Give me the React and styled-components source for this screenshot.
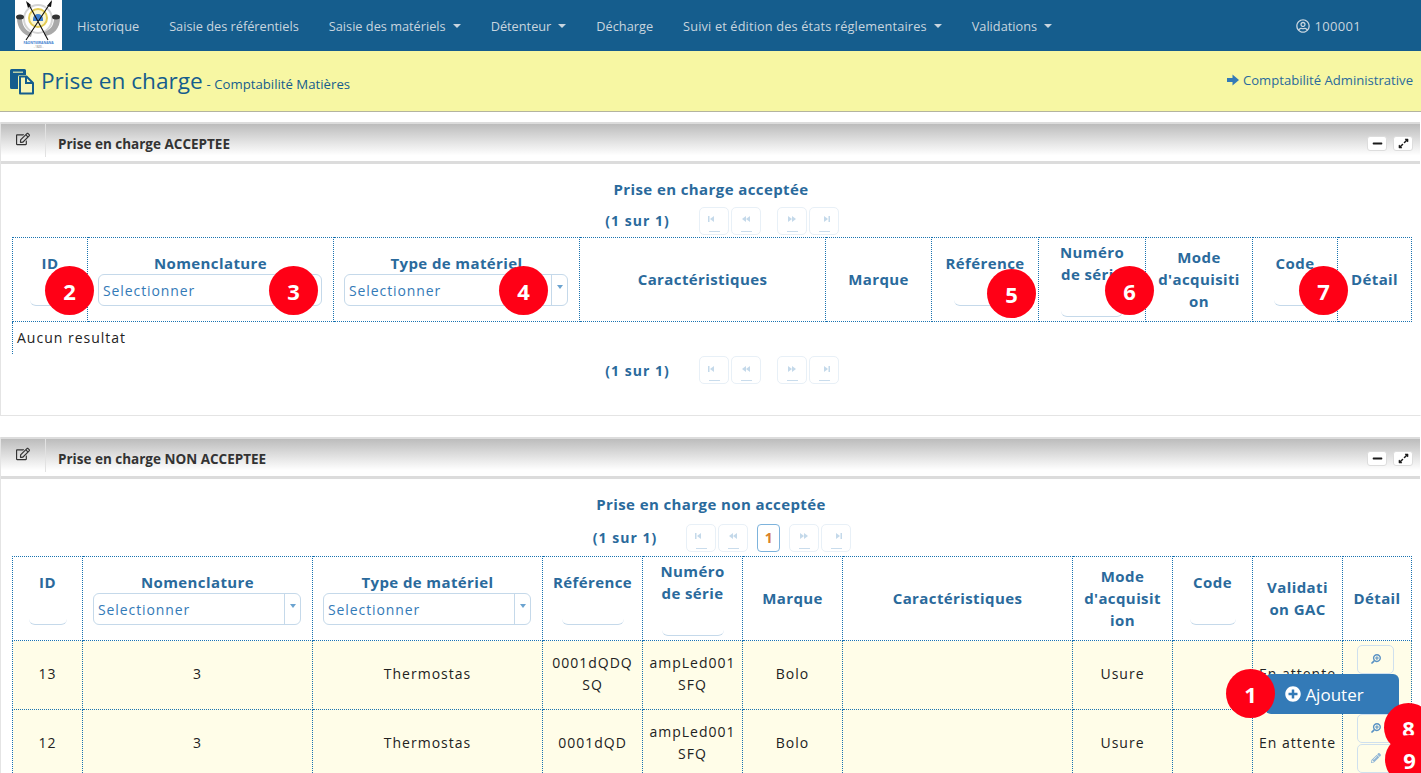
import React from "react";
import styled, { createGlobalStyle } from "styled-components";
import { FaRegEdit, FaMinus, FaExpandAlt, FaPlusCircle, FaSearchPlus, FaPencilAlt, FaRegUserCircle } from "react-icons/fa";

const GlobalStyle = createGlobalStyle`
  html, body { margin: 0; padding: 0; height: 773px; overflow: hidden; background: #fff; }
  body { font-family: "Open Sans", "Noto Sans", sans-serif; }
  * { box-sizing: border-box; }
`;

const BLUE = "#155d8d";
const LINK = "#2a6a9c";
const DOTS = "1px dotted #1a73b0";

const Page = styled.div`
  position: relative;
  width: 1421px;
  height: 773px;
  overflow: hidden;
`;

const Navbar = styled.nav`
  height: 51px;
  background: ${BLUE};
  display: flex;
  align-items: flex-start;
  padding-left: 15px;
`;

const LogoBox = styled.div`
  width: 47px;
  height: 50px;
  background: #fff;
`;

const NavItem = styled.a`
  height: 51px;
  padding: 0 15px;
  display: flex;
  align-items: center;
  gap: 6px;
  font-size: 12.75px;
  letter-spacing: ${(p) => p.$spacing || 0}px;
  color: #c8d5df;
  white-space: nowrap;
`;

const Caret = styled.span`
  width: 0;
  height: 0;
  margin-left: 1px;
  border-left: 4px solid transparent;
  border-right: 4px solid transparent;
  border-top: 4px solid #c8d5df;
`;

const UserItem = styled(NavItem)`
  margin-left: auto;
  padding-right: 60px;
  gap: 5px;
  font-size: 13px;
  letter-spacing: 0.3px;
  svg { font-size: 14px; }
`;

const SubHeader = styled.header`
  height: 61px;
  background: #f7f7a3;
  border-bottom: 1px solid #b3b3a0;
  display: flex;
  align-items: center;
  justify-content: space-between;
  padding: 0 8px 0 10px;
  color: ${BLUE};
`;

const TitleWrap = styled.div`
  display: flex;
  align-items: center;
  gap: 7px;
  margin-top: 2px;
`;

const PageTitle = styled.h1`
  margin: 0;
  font-size: 22.6px;
  font-weight: 400;
  line-height: 34px;
`;

const PageSub = styled.small`
  font-size: 13.2px;
  margin-left: -2px;
`;

const AdminLink = styled.a`
  display: flex;
  align-items: center;
  gap: 4px;
  font-size: 13.1px;
  margin-bottom: 2px;
  color: ${LINK};
`;

const Panel = styled.section`
  margin-top: ${(p) => p.$top}px;
  height: ${(p) => p.$height}px;
  border-left: 1px solid #e4e4e4;
  border-right: 1px solid transparent;
  border-bottom: 1px solid #e4e4e4;
`;

const PanelHead = styled.div`
  height: 42px;
  border-top: 2px solid #dcdcdc;
  border-bottom: 3px solid #dcdcdc;
  background: linear-gradient(to bottom, #bcbcbc 0%, #e8e8e8 55%, #fff 85%);
  display: flex;
  align-items: stretch;
`;

const PanelIcon = styled.div`
  width: 45px;
  border-right: 1px solid #e2e2e2;
  margin-bottom: 4px;
  padding: 7px 0 0 15px;
  color: #333;
  font-size: 14px;
`;

const PanelTitle = styled.h2`
  margin: 0;
  padding: 11px 0 0 12px;
  font-size: 13.5px;
  font-weight: 700;
  color: #333;
`;

const PanelTools = styled.div`
  margin-left: auto;
  display: flex;
  gap: 6px;
  padding: 12px 7px 0 0;
`;

const ToolButton = styled.button`
  width: 20px;
  height: 15px;
  padding: 0;
  border: 1px solid #ddd;
  border-radius: 3px;
  background: #fff;
  color: #1b1b1b;
  display: flex;
  align-items: center;
  justify-content: center;
  font-size: 11px;
`;

const PanelBody = styled.div`
  padding: ${(p) => p.$top}px 10px 0 11px;
`;

const TableTitle = styled.div`
  text-align: center;
  font-size: 15px;
  line-height: 22px;
  font-weight: 700;
  letter-spacing: 0.4px;
  color: ${LINK};
`;

const Pager = styled.div`
  height: 29px;
  margin: ${(p) => p.$margin};
  padding-left: 22px;
  display: flex;
  justify-content: center;
  align-items: center;
  gap: 2px;
`;

const PagerText = styled.span`
  font-size: 14px;
  font-weight: 700;
  letter-spacing: 1px;
  color: ${LINK};
  margin-right: 27px;
`;

const PagerBtn = styled.span`
  position: relative;
  width: 30px;
  height: 28px;
  border: 1px solid #e8f0f7;
  border-radius: 5px;
  display: flex;
  align-items: center;
  justify-content: center;
  margin-right: ${(p) => (p.$gap ? "14px" : "0")};
  padding-bottom: 3px;
  background: #fff;
  &::after {
    content: "";
    position: absolute;
    left: 9px;
    bottom: 2px;
    width: 11px;
    height: 1px;
    background: #c9dcec;
  }
`;

const PageNum = styled.span`
  width: 23px;
  height: 28px;
  margin: 0 7px;
  border: 1px solid #7db3dc;
  border-radius: 4px;
  font-size: 14px;
  font-weight: 700;
  color: #d9822b;
  display: flex;
  align-items: center;
  justify-content: center;
`;

const Table = styled.table`
  width: 1399px;
  table-layout: fixed;
  border-collapse: collapse;
`;

const Th = styled.th`
  height: 84px;
  padding: 0 0 2px;
  border: ${DOTS};
  vertical-align: middle;
  text-align: center;
  font-size: 15px;
  line-height: 22px;
  font-weight: 700;
  letter-spacing: 0.4px;
  color: ${LINK};
`;

const Td = styled.td`
  height: 69px;
  padding: 0 4px 2px;
  border: ${DOTS};
  text-align: center;
  vertical-align: middle;
  background: #fffde8;
  font-size: 14px;
  line-height: 22px;
  letter-spacing: 1px;
  color: #222;
`;

const EmptyCell = styled.td`
  height: 32px;
  padding: 0 4px;
  border-left: ${DOTS};
  font-size: 14px;
  letter-spacing: 1px;
  color: #222;
`;

const FilterInput = styled.div`
  height: 32px;
  width: ${(p) => p.$width}px;
  margin: 0 auto;
  border-bottom: 1px solid #c5d9ea;
  border-radius: 6px;
`;

const SelectBox = styled.div`
  height: 32px;
  margin: 0 11px 0 10px;
  display: flex;
  border: 1px solid #c5d9ea;
  border-radius: 6px;
  font-size: 14px;
  font-weight: 400;
  letter-spacing: 0.9px;
  color: #337ab7;
  text-align: left;
`;

const SelectText = styled.span`
  flex: 1;
  padding-left: 4px;
  line-height: 31px;
  border-right: 1px solid #c5d9ea;
`;

const SelectArrow = styled.span`
  width: 15px;
  display: flex;
  justify-content: center;
  padding-top: 10px;
  &::after {
    content: "";
    width: 0;
    height: 0;
    border-left: 3px solid transparent;
    border-right: 3px solid transparent;
    border-top: 4px solid #6ba3d0;
  }
`;

const DetailStack = styled.div`
  display: flex;
  flex-direction: column;
  align-items: center;
  gap: 1px;
  padding-right: 3px;
`;

const DetailBtn = styled.span`
  width: 37px;
  height: 29px;
  border: 1px solid #cfe0ee;
  border-radius: 5px;
  background: #fffde8;
  display: flex;
  align-items: center;
  justify-content: center;
  color: ${(p) => (p.$flip ? "#5b93c4" : "#8fb5d6")};
  font-size: 10px;
  svg { transform: ${(p) => (p.$flip ? "scaleX(-1)" : "none")}; }
`;

const AddButton = styled.button`
  position: absolute;
  left: 1265px;
  top: 674px;
  width: 134px;
  height: 40px;
  padding: 0 15px 0 0;
  border: none;
  border-radius: 6px;
  background: #337ab7;
  color: #fff;
  font-family: inherit;
  font-size: 17px;
  display: flex;
  align-items: center;
  justify-content: center;
  gap: 4px;
  svg { font-size: 16px; }
`;

const Badge = styled.span`
  position: absolute;
  left: ${(p) => p.$x - 25}px;
  top: ${(p) => p.$y - 25}px;
  width: 49px;
  height: 49px;
  border-radius: 50%;
  background: #ff0016;
  color: #fff;
  font-size: 22px;
  font-weight: 700;
  display: flex;
  align-items: center;
  justify-content: center;
`;

function Logo() {
  return (
    <svg width="47" height="50" viewBox="0 0 47 50">
      <circle cx="23" cy="19" r="14" fill="none" stroke="#d4d4d4" strokeWidth="2" />
      <path d="M2 18 C2 28 8 35 16 37 L17 33 C11 31 7 26 7 18 Z" fill="#a9a9a9" />
      <path d="M45 18 C45 28 39 35 30 36 L29 32 C35 30 39 26 39 18 Z" fill="#a9a9a9" />
      <ellipse cx="5" cy="17" rx="4" ry="2.5" fill="#333" />
      <ellipse cx="41" cy="17" rx="4" ry="2.5" fill="#333" />
      <circle cx="23" cy="18" r="9" fill="#fbf6d0" stroke="#e3cc55" strokeWidth="2" />
      <path d="M18 19a5 5 0 0 1 10 0v2h-10z" fill="#3f7fd0" />
      <path d="M13 3 L33 40 M36 2 L11 40" stroke="#111" strokeWidth="1.1" />
      <path d="M37 0 L32 6 L36 7 Z M11 1 L13 8 L16 5 Z" fill="#111" />
      <text x="23.5" y="43.5" fontSize="3.4" fontWeight="700" fill="#3f7fd0" textAnchor="middle">FAONTSERANANA</text>
      <text x="23.5" y="48" fontSize="2.8" fill="#666" textAnchor="middle">- 1820 -</text>
    </svg>
  );
}

// back sheet is solid, front sheet is an outline with a folded corner
function DocsIcon() {
  return (
    <svg width="24" height="26" viewBox="0 0 24 26">
      <path d="M1.5 0h13A1.5 1.5 0 0 1 16 1.5V6h-6a2 2 0 0 0-2 2v12H1.5A1.5 1.5 0 0 1 0 18.5v-17A1.5 1.5 0 0 1 1.5 0z" fill="#155d8d" />
      <rect x="3" y="2.5" width="10" height="1.5" fill="#b9cfa8" />
      <path d="M10 7.5h6.5L23 14v10.5H10z" fill="#f9f6b4" stroke="#155d8d" strokeWidth="2" strokeLinejoin="round" />
      <path d="M16 8v6h6" fill="none" stroke="#155d8d" strokeWidth="2" />
    </svg>
  );
}

function ArrowIcon() {
  return (
    <svg width="12" height="12" viewBox="0 0 12 12" fill="#337ab7">
      <path d="M0 4h5.5V0.5L12 6l-6.5 5.5V8H0z" />
    </svg>
  );
}

function SeekIcon({ last, end }) {
  return (
    <svg width="12" height="8" viewBox="0 0 12 8" fill="#c4d9ea" transform={last ? "scale(-1 1)" : undefined}>
      {end && <rect x="0" y="1" width="1.5" height="6" />}
      <path d="M2 4l4-3v6z" />
      {!end && <path d="M6 4l4-3v6z" />}
    </svg>
  );
}

function PagerBar({ page, margin }) {
  return (
    <Pager $margin={margin}>
      <PagerText>(1 sur 1)</PagerText>
      <PagerBtn><SeekIcon end /></PagerBtn>
      <PagerBtn $gap={!page}><SeekIcon /></PagerBtn>
      {page && <PageNum>1</PageNum>}
      <PagerBtn><SeekIcon last /></PagerBtn>
      <PagerBtn><SeekIcon last end /></PagerBtn>
    </Pager>
  );
}

function PanelHeader({ title }) {
  return (
    <PanelHead>
      <PanelIcon><FaRegEdit /></PanelIcon>
      <PanelTitle>{title}</PanelTitle>
      <PanelTools>
        <ToolButton><FaMinus /></ToolButton>
        <ToolButton><FaExpandAlt /></ToolButton>
      </PanelTools>
    </PanelHead>
  );
}

function SelectFilter() {
  return (
    <SelectBox>
      <SelectText>Selectionner</SelectText>
      <SelectArrow />
    </SelectBox>
  );
}

const acceptedCols = [75, 246, 246, 246, 106, 107, 107, 107, 85, 74];
const pendingCols = [70, 230, 230, 100, 100, 100, 230, 100, 80, 90, 69];

const rows = [
  { id: 13, ref: "0001dQDQ SQ" },
  { id: 12, ref: "0001dQD" },
];

const badges = [
  { n: 2, x: 70, y: 291 },
  { n: 3, x: 294, y: 291 },
  { n: 4, x: 524, y: 291 },
  { n: 5, x: 1012, y: 294 },
  { n: 6, x: 1130, y: 291 },
  { n: 7, x: 1324, y: 291 },
  { n: 1, x: 1251, y: 694 },
  { n: 8, x: 1409, y: 728 },
  { n: 9, x: 1410, y: 760 },
];

export default function App() {
  return (
    <Page>
      <GlobalStyle />
      <Navbar>
        <LogoBox><Logo /></LogoBox>
        <NavItem>Historique</NavItem>
        <NavItem>Saisie des référentiels</NavItem>
        <NavItem>Saisie des matériels <Caret /></NavItem>
        <NavItem>Détenteur <Caret /></NavItem>
        <NavItem>Décharge</NavItem>
        <NavItem $spacing={0.15}>Suivi et édition des états réglementaires <Caret /></NavItem>
        <NavItem>Validations <Caret /></NavItem>
        <UserItem><FaRegUserCircle /> 100001</UserItem>
      </Navbar>

      <SubHeader>
        <TitleWrap>
          <DocsIcon />
          <PageTitle>Prise en charge <PageSub>- Comptabilité Matières</PageSub></PageTitle>
        </TitleWrap>
        <AdminLink><ArrowIcon /> Comptabilité Administrative</AdminLink>
      </SubHeader>

      <Panel $top={10} $height={294}>
        <PanelHeader title="Prise en charge ACCEPTEE" />
        <PanelBody $top={14}>
          <TableTitle>Prise en charge acceptée</TableTitle>
          <PagerBar margin="6px 0 2px" />
          <Table>
            <colgroup>{acceptedCols.map((w, i) => <col key={i} width={w} />)}</colgroup>
            <thead>
              <tr>
                <Th>ID<FilterInput $width={40} /></Th>
                <Th>Nomenclature<SelectFilter /></Th>
                <Th>Type de matériel<SelectFilter /></Th>
                <Th>Caractéristiques</Th>
                <Th>Marque</Th>
                <Th>Référence<FilterInput $width={62} /></Th>
                <Th>Numéro<br />de série<FilterInput $width={62} /></Th>
                <Th>Mode<br />d'acquisiti<br />on</Th>
                <Th>Code<FilterInput $width={42} /></Th>
                <Th>Détail</Th>
              </tr>
            </thead>
            <tbody>
              <tr><EmptyCell colSpan={10}>Aucun resultat</EmptyCell></tr>
            </tbody>
          </Table>
          <PagerBar margin="2px 0 0" />
        </PanelBody>
      </Panel>

      <Panel $top={21} $height={340}>
        <PanelHeader title="Prise en charge NON ACCEPTEE" />
        <PanelBody $top={14}>
          <TableTitle>Prise en charge non acceptée</TableTitle>
          <PagerBar page margin="8px 0 4px" />
          <Table>
            <colgroup>{pendingCols.map((w, i) => <col key={i} width={w} />)}</colgroup>
            <thead>
              <tr>
                <Th>ID<FilterInput $width={38} /></Th>
                <Th>Nomenclature<SelectFilter /></Th>
                <Th>Type de matériel<SelectFilter /></Th>
                <Th>Référence<FilterInput $width={62} /></Th>
                <Th>Numéro<br />de série<FilterInput $width={62} /></Th>
                <Th>Marque</Th>
                <Th>Caractéristiques</Th>
                <Th>Mode<br />d'acquisit<br />ion</Th>
                <Th>Code<FilterInput $width={46} /></Th>
                <Th>Validati<br />on GAC</Th>
                <Th>Détail</Th>
              </tr>
            </thead>
            <tbody>
              {rows.map((r) => (
                <tr key={r.id}>
                  <Td>{r.id}</Td>
                  <Td>3</Td>
                  <Td>Thermostas</Td>
                  <Td>{r.ref}</Td>
                  <Td>ampLed001 SFQ</Td>
                  <Td>Bolo</Td>
                  <Td />
                  <Td>Usure</Td>
                  <Td />
                  <Td>En attente</Td>
                  <Td>
                    <DetailStack>
                      <DetailBtn $flip><FaSearchPlus /></DetailBtn>
                      <DetailBtn><FaPencilAlt /></DetailBtn>
                    </DetailStack>
                  </Td>
                </tr>
              ))}
            </tbody>
          </Table>
        </PanelBody>
      </Panel>

      <AddButton><FaPlusCircle /> Ajouter</AddButton>
      {badges.map((b) => <Badge key={b.n} $x={b.x} $y={b.y}>{b.n}</Badge>)}
    </Page>
  );
}
